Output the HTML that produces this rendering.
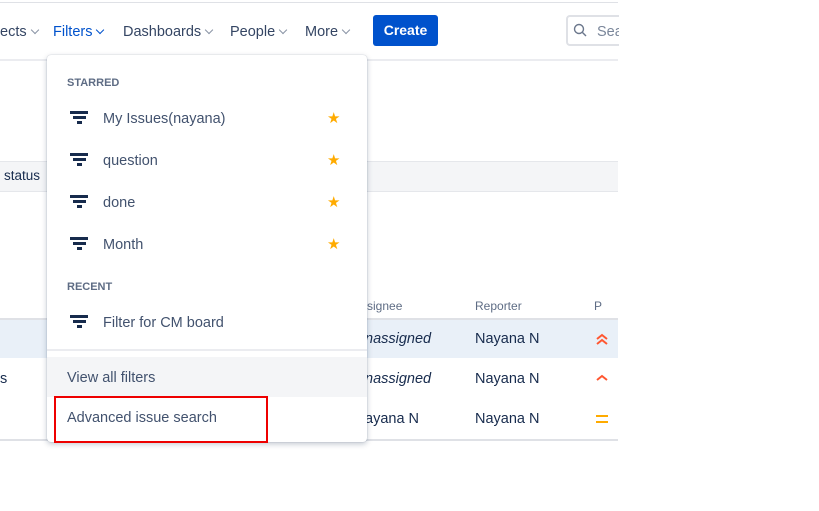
<!DOCTYPE html>
<html><head><style>
*{box-sizing:border-box;margin:0;padding:0}
body{width:819px;height:511px;background:#fff;font-family:"Liberation Sans",sans-serif;position:relative;overflow:hidden;color:#172b4d}
.a{position:absolute}
.nav{font-size:14.5px;color:#344563;top:24px}
.chev{display:inline-block;width:6px;height:6px;border-right:1.5px solid #8993a4;border-bottom:1.5px solid #8993a4;transform:rotate(45deg);margin-left:5px;position:relative;top:-3px}
.fi{position:absolute;left:23px;width:18px}
.fi i{display:block;height:2.5px;background:#172b4d;margin:0 auto 2.5px}
.item{position:absolute;left:0;width:320px;height:42px;font-size:14.5px;color:#42526e}
.item span.t{position:absolute;left:56px;top:14px}
.star{position:absolute;left:280px;top:12px;color:#ffab00;font-size:15px}
.hd{position:absolute;left:20px;font-size:11px;font-weight:bold;color:#5e6c84}
</style></head><body>
<div class="a" style="left:0;top:2px;width:618px;height:1px;background:#dfe1e6"></div>
<div class="a" style="left:0;top:59px;width:618px;height:2px;background:#ebecf0"></div>
<div class="a nav" style="left:0">ects<span class="chev"></span></div>
<div class="a nav" style="left:53px;color:#0052cc">Filters<span class="chev" style="border-color:#0052cc"></span></div>
<div class="a nav" style="left:123px">Dashboards<span class="chev"></span></div>
<div class="a nav" style="left:230px">People<span class="chev"></span></div>
<div class="a nav" style="left:305px">More<span class="chev"></span></div>
<div class="a" style="left:373px;top:15px;width:65px;height:31px;background:#0052cc;border-radius:3px;color:#fff;font-weight:bold;font-size:14px;text-align:center;line-height:31px">Create</div>
<div class="a" style="left:566px;top:15px;width:53px;height:31px;overflow:hidden"><div style="width:70px;height:31px;border:2px solid #dfe1e6;border-radius:4px;font-size:14.5px;color:#7a869a;padding:7px 0 0 29px">Sea</div></div>
<svg class="a" style="left:573px;top:23px" width="14" height="14"><circle cx="6" cy="6" r="4.5" fill="none" stroke="#6b778c" stroke-width="1.4"/><path d="M9.5 9.5L13 13" stroke="#6b778c" stroke-width="1.4"/></svg>
<div class="a" style="left:0;top:161px;width:618px;height:31px;background:#f4f5f7;border-top:1px solid #e5e7eb;border-bottom:1px solid #e5e7eb"></div>
<div class="a" style="left:4px;top:168px;font-size:13.5px">status</div>
<div class="a" style="left:367px;top:299px;font-size:12px;color:#5e6c84">signee</div>
<div class="a" style="left:475px;top:299px;font-size:12px;color:#5e6c84">Reporter</div>
<div class="a" style="left:594px;top:299px;font-size:12px;color:#5e6c84">P</div>
<div class="a" style="left:0;top:318px;width:618px;height:2px;background:#dfe1e6"></div>
<div class="a" style="left:0;top:320px;width:618px;height:38px;background:#e9f0f8"></div>
<div class="a" style="left:0;top:439px;width:618px;height:2px;background:#dfe1e6"></div>
<div class="a" style="left:365px;top:331px;font-size:14.5px;font-style:italic">nassigned</div>
<div class="a" style="left:365px;top:371px;font-size:14.5px;font-style:italic">nassigned</div>
<div class="a" style="left:365px;top:411px;font-size:14.5px">ayana N</div>
<div class="a" style="left:475px;top:331px;font-size:14.5px">Nayana N</div>
<div class="a" style="left:475px;top:371px;font-size:14.5px">Nayana N</div>
<div class="a" style="left:475px;top:411px;font-size:14.5px">Nayana N</div>
<div class="a" style="left:0;top:371px;font-size:14.5px">s</div>
<svg class="a" style="left:595px;top:333px" width="14" height="12"><path d="M2 6L7 2L12 6M2 11L7 7L12 11" fill="none" stroke="#ff5630" stroke-width="2"/></svg>
<svg class="a" style="left:595px;top:374px" width="14" height="8"><path d="M2 6L7 2L12 6" fill="none" stroke="#ff5630" stroke-width="2"/></svg>
<svg class="a" style="left:595px;top:414px" width="14" height="10"><path d="M1 2H13M1 8H13" stroke="#ffab00" stroke-width="2"/></svg>

<div class="a" style="left:47px;top:55px;width:320px;height:387px;background:#fff;border-radius:4px;box-shadow:0 2px 6px rgba(9,30,66,.25),0 0 1px rgba(9,30,66,.3)">
 <div class="hd" style="top:22px">STARRED</div>
 <div class="item" style="top:42px"><div class="fi" style="top:14px"><i style="width:18px"></i><i style="width:13px"></i><i style="width:5px"></i></div><span class="t">My Issues(nayana)</span><span class="star">★</span></div>
 <div class="item" style="top:84px"><div class="fi" style="top:14px"><i style="width:18px"></i><i style="width:13px"></i><i style="width:5px"></i></div><span class="t">question</span><span class="star">★</span></div>
 <div class="item" style="top:126px"><div class="fi" style="top:14px"><i style="width:18px"></i><i style="width:13px"></i><i style="width:5px"></i></div><span class="t">done</span><span class="star">★</span></div>
 <div class="item" style="top:168px"><div class="fi" style="top:14px"><i style="width:18px"></i><i style="width:13px"></i><i style="width:5px"></i></div><span class="t">Month</span><span class="star">★</span></div>
 <div class="hd" style="top:226px">RECENT</div>
 <div class="item" style="top:246px"><div class="fi" style="top:14px"><i style="width:18px"></i><i style="width:13px"></i><i style="width:5px"></i></div><span class="t">Filter for CM board</span></div>
 <div class="a" style="left:0;top:294px;width:320px;height:2px;background:#ebecf0"></div>
 <div class="a" style="left:0;top:302px;width:320px;height:40px;background:#f4f5f7"></div>
 <div class="a" style="left:20px;top:315px;font-size:14.5px;color:#42526e">View all filters</div>
 <div class="a" style="left:20px;top:355px;font-size:14.5px;color:#42526e">Advanced issue search</div>
</div>
<div class="a" style="left:54px;top:396px;width:214px;height:47px;border:2.5px solid #ee0000"></div>
</body></html>
